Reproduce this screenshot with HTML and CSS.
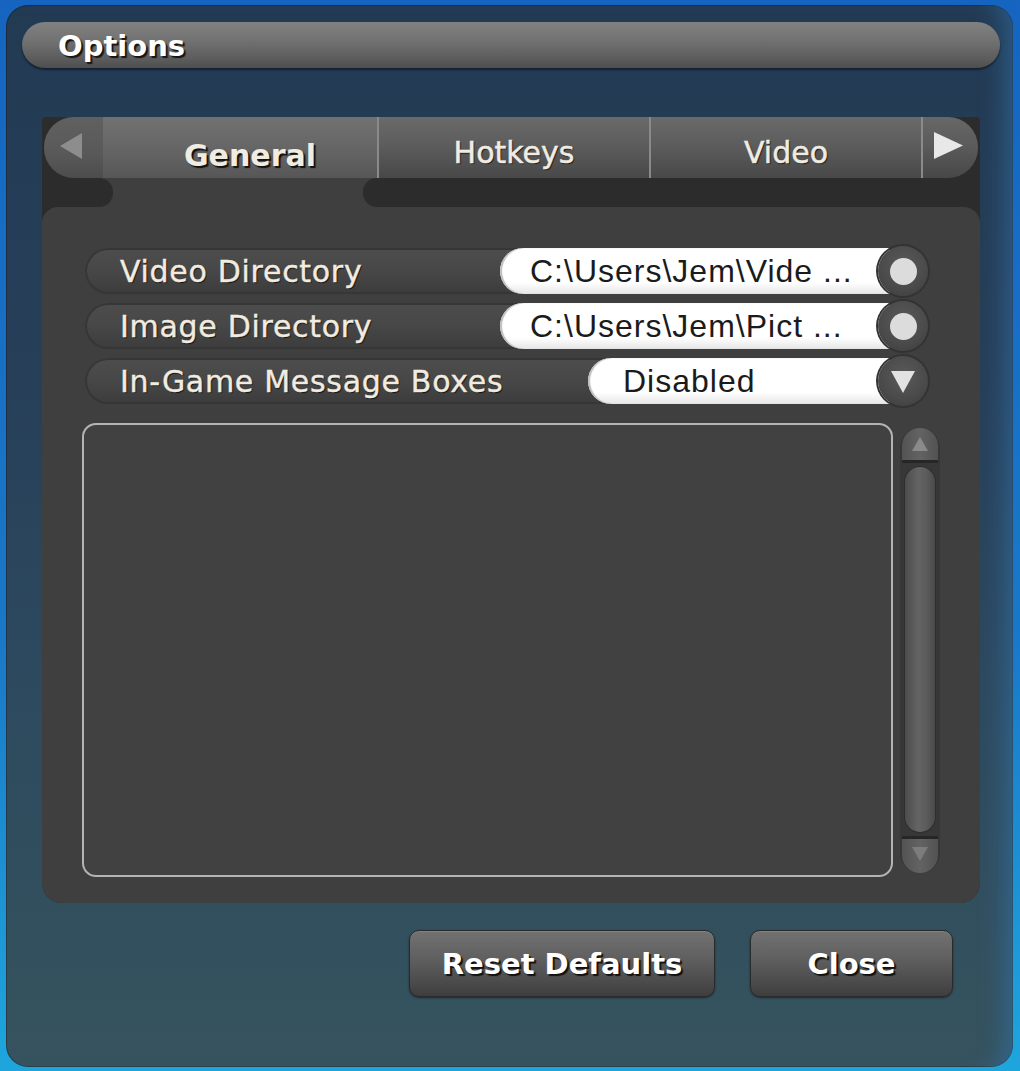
FILE: index.html
```html
<!DOCTYPE html>
<html lang="en">
<head>
	<meta charset="UTF-8">
	<title>Options</title>
	<link rel="stylesheet" href="styles.css">
</head>
<body>
	<div class="window">
		<div class="titlebar">Options</div>

		<div class="panel">
			<div class="tabs">
				<div class="tab-arrow arrow-l">
					<svg width="24" height="26" viewBox="0 0 24 26"><polygon points="23,0 23,26 1,13" fill="#8d8d8d"/></svg>
				</div>
				<div class="tab active">General</div>
				<div class="tab">Hotkeys</div>
				<div class="tab">Video</div>
				<div class="tab-arrow arrow-r">
					<svg width="29" height="27" viewBox="0 0 29 27"><polygon points="0,0 0,27 29,13.5" fill="#e8e8e8"/></svg>
				</div>
			</div>
			<div class="tab-base">
				<div class="base-dark base-l"></div>
				<div class="base-gap"></div>
				<div class="base-dark base-r"></div>
			</div>

			<div class="content">
				<div class="row">
					<div class="label">Video Directory</div>
					<div class="value">C:\Users\Jem\Vide ...</div>
					<div class="knob"><span class="dot"></span></div>
				</div>
				<div class="row">
					<div class="label">Image Directory</div>
					<div class="value">C:\Users\Jem\Pict ...</div>
					<div class="knob"><span class="dot"></span></div>
				</div>
				<div class="row">
					<div class="label">In-Game Message Boxes</div>
					<div class="value value-short">Disabled</div>
					<div class="knob">
						<svg width="24" height="22" viewBox="0 0 24 22"><polygon points="0,0 24,0 12,22" fill="#e2e2e2"/></svg>
					</div>
				</div>

				<div class="list-wrap">
					<div class="list"></div>
					<div class="scrollbar">
						<div class="sb-btn sb-up">
							<svg width="16" height="14" viewBox="0 0 16 14"><polygon points="8,0 16,14 0,14" fill="#8a8a8a"/></svg>
						</div>
						<div class="sb-track"><div class="sb-thumb"></div></div>
						<div class="sb-btn sb-down">
							<svg width="16" height="14" viewBox="0 0 16 14"><polygon points="0,0 16,0 8,14" fill="#7c7c7c"/></svg>
						</div>
					</div>
				</div>
			</div>
		</div>

		<div class="actions">
			<button class="btn btn-reset">Reset Defaults</button>
			<button class="btn btn-close">Close</button>
		</div>
	</div>
</body>
</html>
```

FILE: styles.css
```css
* {margin: 0;padding: 0;box-sizing: border-box}
html, body {height: 100%}
body {background: linear-gradient(180deg, #1565c0 0%, #1a78c8 60%, #1ea6dc 100%);overflow: hidden;font-family: "DejaVu Sans", Verdana, sans-serif}

.window {height: 1062px;margin: 5px 7px 4px 6px;padding-top: 17px;border-radius: 22px;
	background: linear-gradient(180deg, #233a53 0%, #273f59 35%, #2d4a5f 65%, #36535e 100%);
	box-shadow: inset -26px 0 24px -18px rgba(50,120,180,.55), inset 0 0 0 1px rgba(0,0,0,.25)}

.titlebar {height: 46px;margin: 0 13px 0 16px;padding-left: 36px;border-radius: 23px;
	background: linear-gradient(180deg, #818181 0%, #727272 40%, #5c5c5c 80%, #4e4e4e 100%);
	box-shadow: 0 2px 2px rgba(0,0,0,.45);
	color: #fff;font-weight: bold;font-size: 29px;line-height: 48px;
	text-shadow: 2px 2px 1px #151515}

/* panel with tabs */
.panel {margin: 49px 33px 0 36px;background: #2c2c2c;border-radius: 4px 4px 20px 20px}
.tabs {display: flex;height: 61px;padding: 0 2px}
.tab-arrow {display: flex;align-items: center;justify-content: center}
.arrow-l {width: 59px;border-radius: 30px 0 0 30px;background: linear-gradient(180deg, #606060 0%, #595959 60%, #4c4c4c 100%)}
.arrow-l svg {margin-left: -6px;margin-top: -4px}
.arrow-r {flex: 1;border-radius: 0 30px 30px 0;border-left: 2px solid #8a8a8a;
	background: linear-gradient(180deg, #676767 0%, #5a5a5a 50%, #474747 100%)}
.arrow-r svg {margin-left: -4px;margin-top: -4px}
.tab {width: 272px;border-left: 2px solid #8a8a8a;padding-top: 11px;text-align: center;
	background: linear-gradient(180deg, #6a6a6a 0%, #5d5d5d 45%, #484848 100%);
	color: #f1ece2;font-size: 30px;line-height: 50px;text-shadow: 1px 1px 1px #111;-webkit-text-stroke: .5px #f1ece2}
.tab.active {width: 274px;border-left: none;padding-top: 14px;padding-left: 20px;font-weight: bold;-webkit-text-stroke: 0;
	background: linear-gradient(180deg, #717171 0%, #676767 45%, #575757 100%);text-shadow: 2px 2px 1px #111}

.tab-base {display: flex;height: 29px;background: #3f3f3f}
.base-dark {background: #2c2c2c}
.base-l {width: 71px;border-radius: 0 14px 14px 0}
.base-gap {width: 250px}
.base-r {flex: 1;border-radius: 14px 0 0 14px}

.content {background: #3f3f3f;border-radius: 16px 16px 20px 20px;padding: 41px 40px 26px 40px}

.row {display: flex;align-items: center;height: 46px;margin: 0 12px 9px 3px;border-radius: 23px;
	background: linear-gradient(180deg, #4d4d4d 0%, #474747 50%, #3c3c3c 100%);
	box-shadow: inset 0 0 0 2px #363636}
.label {flex: 1;padding-left: 35px;color: #f2ece0;font-size: 30px;letter-spacing: .7px;white-space: nowrap;
	text-shadow: 1px 1px 1px #111;-webkit-text-stroke: .4px #f2ece0}
.value {width: 390px;height: 46px;padding-left: 30px;border-radius: 23px 0 0 23px;
	background: linear-gradient(180deg, #ffffff 0%, #ffffff 75%, #e6e6e6 100%);
	box-shadow: inset 2px 0 1px #bdbdbd;
	color: #1b1b1b;font-family: "Liberation Sans", Arial, sans-serif;font-size: 32px;letter-spacing: 1px;line-height: 46px;white-space: nowrap}
.value-short {width: 302px;padding-left: 35px}
.knob {display: flex;align-items: center;justify-content: center;flex: none;width: 50px;height: 50px;margin-left: -12px;border-radius: 50%;
	background: radial-gradient(circle at 50% 40%, #5a5a5a 0%, #4a4a4a 60%, #3a3a3a 100%);
	box-shadow: 0 0 0 2px #333}
.knob svg {margin-top: 2px}
.dot {width: 27px;height: 27px;border-radius: 50%;background: #dcdcdc}

.list-wrap {display: flex;height: 454px;margin-top: 19px}
.list {flex: 1;border: 2px solid #b4b4b4;border-radius: 14px;background: #414141}
.scrollbar {display: flex;flex-direction: column;width: 40px;margin: 5px 0 4px 7px;border-radius: 20px;background: #373737}
.sb-btn {display: flex;align-items: center;justify-content: center;margin: 0 2px;background: linear-gradient(90deg, #535353 0%, #636363 50%, #525252 100%)}
.sb-up {height: 35px;border-radius: 18px 18px 0 0;border-bottom: 3px solid #262626}
.sb-down {height: 37px;border-radius: 0 0 18px 18px;border-top: 3px solid #262626}
.sb-down svg {margin-top: -4px}
.sb-track {flex: 1;padding: 4px 5px}
.sb-thumb {height: 100%;border-radius: 15px;background: linear-gradient(90deg, #4c4c4c 0%, #646464 45%, #5c5c5c 70%, #4a4a4a 100%);
	box-shadow: 0 0 0 1px #2e2e2e}

.actions {display: flex;justify-content: flex-end;gap: 35px;margin: 27px 33px 0 36px;padding-right: 27px}
.btn {height: 67px;border: 1px solid #2a2a2a;border-radius: 10px;
	background: linear-gradient(180deg, #727272 0%, #5e5e5e 45%, #4a4a4a 80%, #3e3e3e 100%);
	box-shadow: 0 1px 2px rgba(0,0,0,.5), inset 0 1px 0 rgba(255,255,255,.12);
	color: #fff;font-family: "DejaVu Sans", Verdana, sans-serif;font-weight: bold;font-size: 29px;text-shadow: 2px 2px 1px #111}
.btn-reset {width: 306px}
.btn-close {width: 203px}
```
